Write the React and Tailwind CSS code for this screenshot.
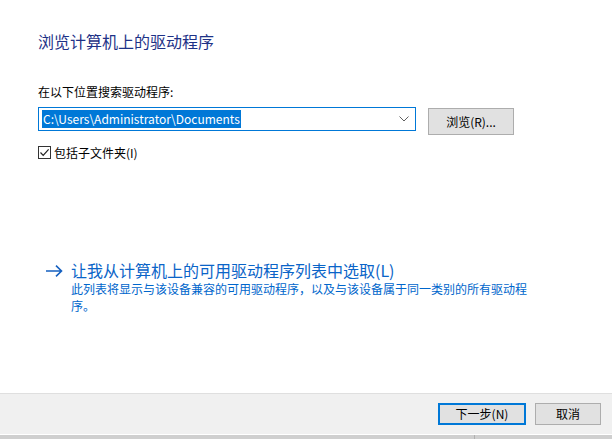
import React from 'react'

const font = "font-['Noto_Sans_CJK_SC','Noto_Sans',sans-serif]"

const Chevron = () => (
  <svg width="10" height="6" viewBox="0 0 10 6" className="text-[#606060]">
    <path d="M0.5 0.5 L5 5 L9.5 0.5" fill="none" stroke="currentColor" strokeWidth="1" />
  </svg>
)

const Check = () => (
  <div className="w-[13px] h-[13px] border border-[#333] bg-white flex items-center justify-center">
    <svg width="11" height="11" viewBox="0 0 11 11">
      <path d="M1.5 5.5 L4.2 8.3 L9.6 2.3" fill="none" stroke="#222" strokeWidth="1.2" />
    </svg>
  </div>
)

export default function App() {
  return (
    <div className={`w-[612px] h-[439px] bg-white flex flex-col text-[#000] ${font}`}>
      <div className="flex-1 px-[38px] pt-[31px]">
        <div className="text-[16px] leading-[20px] text-[#1e3287]">浏览计算机上的驱动程序</div>

        <div className="mt-[33px] text-[12px] leading-[16px]">在以下位置搜索驱动程序:</div>

        <div className="mt-[7px] flex items-start">
          <div className="w-[378px] h-[24px] border border-[#0078d7] flex items-center pl-[3px] pr-[6px]">
            <span className="bg-[#0078d7] text-white text-[12px] leading-[18px] px-px">C:\Users\Administrator\Documents</span>
            <div className="flex-1" />
            <Chevron />
          </div>
          <button className="ml-[12px] mt-px w-[86px] h-[27px] bg-[#e1e1e1] border border-[#adadad] text-[12px] leading-none">浏览(R)...</button>
        </div>

        <div className="mt-[11px] flex items-center gap-[3px]">
          <Check />
          <span className="text-[12px] leading-[13px]">包括子文件夹(I)</span>
        </div>

        <div className="mt-[101px] pl-[8px] flex items-start">
          <svg width="17" height="12" viewBox="0 0 17 12" className="mt-[5px] text-[#1560c0]">
            <path d="M0 6 H15.5 M10 0.7 L15.5 6 L10 11.3" fill="none" stroke="currentColor" strokeWidth="1.6" />
          </svg>
          <div className="ml-[8px] text-[#0a64c8]">
            <div className="text-[16px] leading-[20px]">让我从计算机上的可用驱动程序列表中选取(L)</div>
            <div className="text-[12px] leading-[17px] max-w-[462px] text-[#0066cc]">
              此列表将显示与该设备兼容的可用驱动程序，以及与该设备属于同一类别的所有驱动程序。
            </div>
          </div>
        </div>
      </div>

      <div className="h-[41px] border-t border-[#dfdfdf] bg-[#f0f0f0] flex items-start justify-end pr-[11px] pt-[9px] gap-[9px]">
        <button className="w-[88px] h-[22px] bg-[#e1e1e1] border-2 border-[#0078d7] text-[12px] leading-none">下一步(N)</button>
        <button className="w-[66px] h-[22px] bg-[#e1e1e1] border border-[#adadad] text-[12px] leading-none">取消</button>
      </div>
      <div className="h-px bg-white" />
      <div className="h-[4px] bg-[#cfcfcf] flex">
        <div className="w-[475px] border-r border-[#b0b0b0]" />
      </div>
    </div>
  )
}
